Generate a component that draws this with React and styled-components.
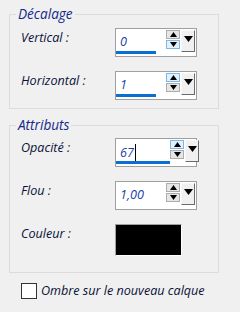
import styled, { createGlobalStyle } from 'styled-components';

const GlobalStyle = createGlobalStyle`
  html, body {
    margin: 0;
    background: #f0f0f0;
  }
  body {
    font-family: "Open Sans", "Noto Sans", sans-serif;
    font-style: italic;
    font-size: 12.6px;
  }
`;

const offsetRows = [
  { label: 'Vertical :', value: '0', bar: 40, hot: 'down' },
  { label: 'Horizontal :', value: '1', bar: 40, hot: 'up' },
];

const attrRows = [
  { label: 'Opacité :', value: '67', bar: 54, hot: 'up', caret: true },
  { label: 'Flou :', value: '1,00', bar: 0, hot: null },
];

function Arrow({ down, size = 7 }) {
  const h = Math.ceil(size / 2) + 1;
  return (
    <svg width={size} height={h} viewBox={`0 0 ${size} ${h}`}>
      <polygon
        points={down ? `0,0 ${size},0 ${size / 2},${h}` : `0,${h} ${size},${h} ${size / 2},0`}
        fill="#000"
      />
    </svg>
  );
}

function SpinField({ row }) {
  return (
    <Field>
      <InputArea>
        <Value>
          {row.value}
          {row.caret && <Caret />}
        </Value>
        <Bar style={{ width: row.bar }} />
      </InputArea>
      <Controls>
        <Spinner>
          <SpinButton $hot={row.hot === 'up'}>
            <Arrow size={7} />
          </SpinButton>
          <SpinButton $hot={row.hot === 'down'}>
            <Arrow down size={7} />
          </SpinButton>
        </Spinner>
        <DropButton>
          <Arrow down size={9} />
        </DropButton>
      </Controls>
    </Field>
  );
}

function App() {
  return (
    <Page>
      <GlobalStyle />
      <Group>
        <Legend>Décalage</Legend>
        <Body $top={6} $bottom={8}>
          {offsetRows.map(row => (
            <Row key={row.label}>
              <Label>{row.label}</Label>
              <SpinField row={row} />
            </Row>
          ))}
        </Body>
      </Group>

      <Group $gap={8}>
        <Legend>Attributs</Legend>
        <Body $top={5} $bottom={16}>
          {attrRows.map(row => (
            <Row key={row.label}>
              <Label>{row.label}</Label>
              <SpinField row={row} />
            </Row>
          ))}
          <Row>
            <Label>Couleur :</Label>
            <Swatch />
          </Row>
        </Body>
      </Group>

      <CheckRow>
        <CheckBox />
        <CheckLabel>Ombre sur le nouveau calque</CheckLabel>
      </CheckRow>
    </Page>
  );
}

const Page = styled.div`
  width: 240px;
  height: 312px;
  box-sizing: border-box;
  padding: 6px 0 0 9px;
`;

const Group = styled.fieldset`
  margin: ${p => p.$gap || 0}px 0 0 0;
  padding: 0;
  width: 210px;
  box-sizing: border-box;
  border: 1px solid #dcdcdc;
  min-width: 0;
`;

const Legend = styled.legend`
  margin-left: 6px;
  padding: 0 2px;
  font-size: 13.6px;
  line-height: 16px;
  color: #14288a;
`;

const Body = styled.div`
  display: flex;
  flex-direction: column;
  gap: 14px;
  padding: ${p => p.$top}px 0 ${p => p.$bottom}px 11px;
`;

const Row = styled.div`
  display: flex;
  align-items: flex-start;
`;

const Label = styled.div`
  width: 94px;
  padding-top: 2px;
  line-height: 16px;
  color: #0a1038;
`;

const Field = styled.div`
  width: 82px;
  height: 29px;
  box-sizing: border-box;
  border: 1px solid #a0a0a0;
  background: #fff;
  display: flex;
`;

const InputArea = styled.div`
  flex: 1;
  display: flex;
  flex-direction: column;
  justify-content: space-between;
  padding-bottom: 2px;
`;

const Value = styled.div`
  padding: 5px 0 0 4px;
  line-height: 16px;
  color: #1b3fa8;
  display: flex;
  align-items: center;
`;

const Caret = styled.span`
  display: inline-block;
  width: 1px;
  height: 17px;
  background: #000;
  margin-left: 1px;
`;

const Bar = styled.div`
  height: 3px;
  background: #0a6fd0;
`;

const Controls = styled.div`
  display: flex;
  align-items: flex-start;
  gap: 1px;
  padding: 1px 1px 0 0;
`;

const Spinner = styled.div`
  display: flex;
  flex-direction: column;
  gap: 1px;
`;

const SpinButton = styled.div`
  width: 14px;
  height: 9px;
  box-sizing: border-box;
  border: 1px solid ${p => (p.$hot ? '#7cb8ec' : '#adadad')};
  background: ${p => (p.$hot ? '#e2f0fc' : '#e6e6e6')};
  display: flex;
  align-items: center;
  justify-content: center;
`;

const DropButton = styled.div`
  width: 14px;
  height: 22px;
  box-sizing: border-box;
  border: 1px solid;
  border-color: #f8f8f8 #6a6a6a #6a6a6a #f8f8f8;
  background: #f0f0f0;
  display: flex;
  justify-content: center;
  padding-top: 5px;
`;

const Swatch = styled.div`
  width: 67px;
  height: 32px;
  box-sizing: border-box;
  border: 1px solid;
  border-color: #a0a0a0 #ffffff #ffffff #a0a0a0;
  background: #000;
`;

const CheckRow = styled.div`
  display: flex;
  align-items: center;
  gap: 4px;
  margin: 10px 0 0 12px;
`;

const CheckBox = styled.div`
  width: 16px;
  height: 16px;
  box-sizing: border-box;
  border: 1px solid #333;
  background: #fff;
`;

const CheckLabel = styled.span`
  line-height: 16px;
  color: #0a1038;
`;

export default App;
